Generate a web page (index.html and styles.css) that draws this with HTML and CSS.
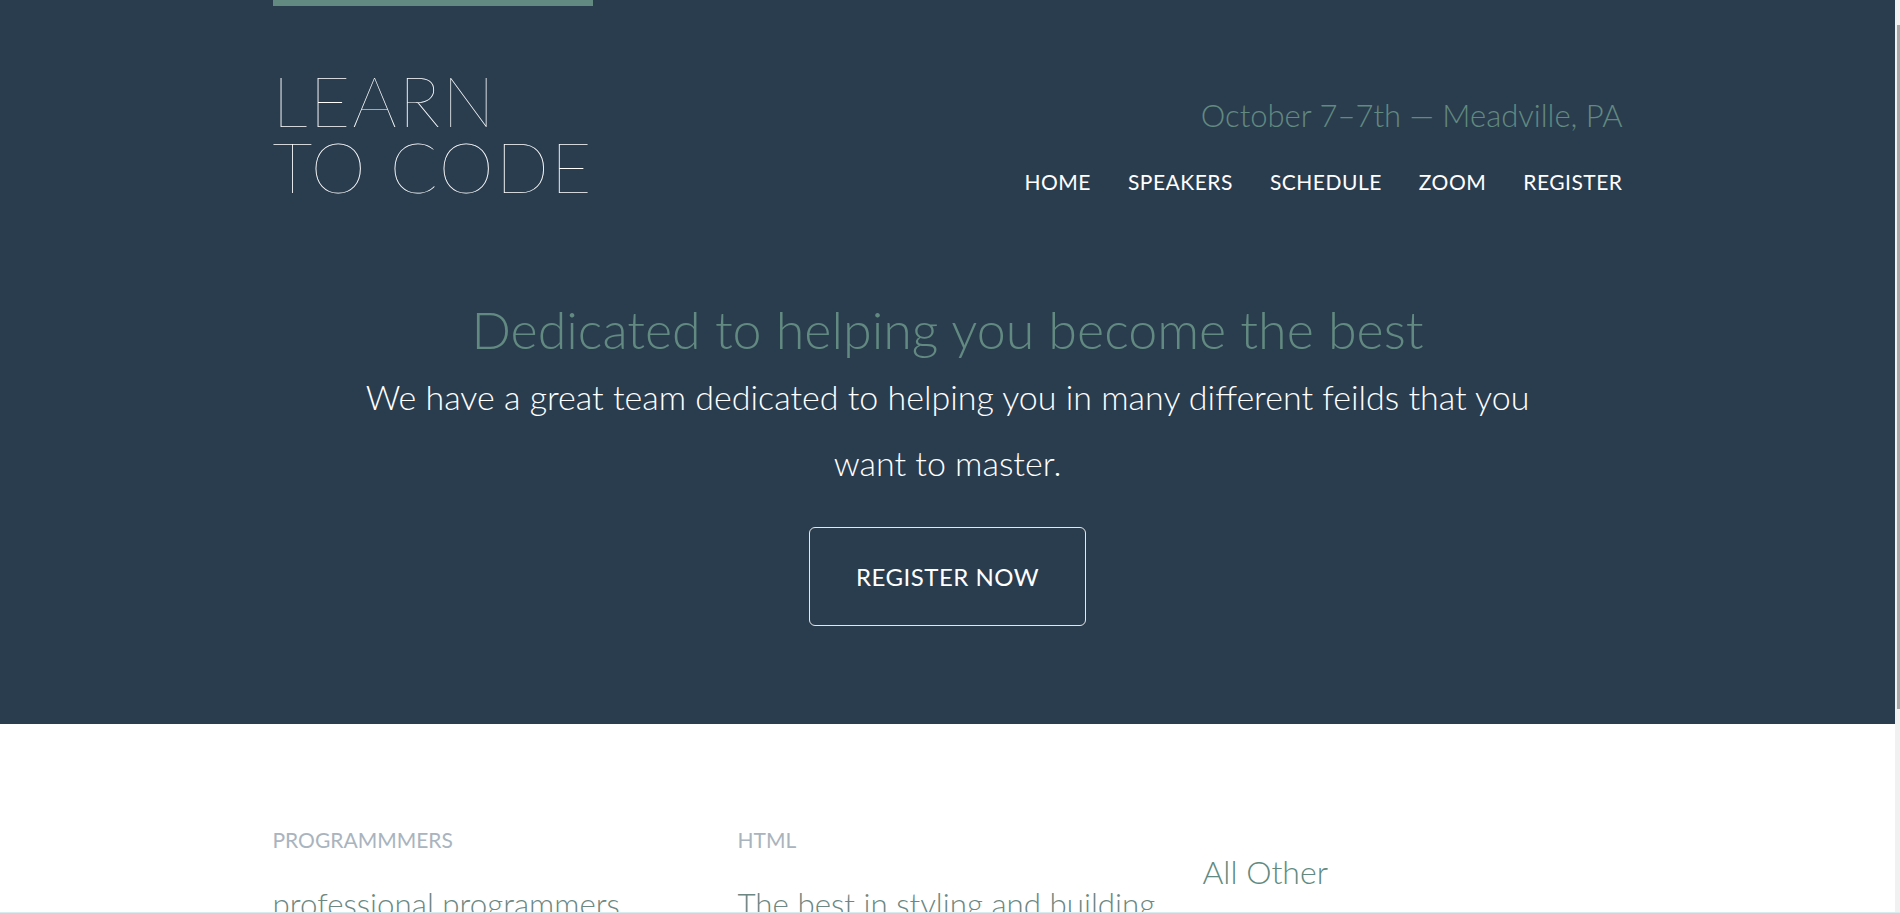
FILE: index.html
```html
<!DOCTYPE html>
<html lang="en">
<head>
<meta charset="utf-8">
<title>Learn to Code</title>
<link rel="stylesheet" href="styles.css">
</head>
<body>
<div class="page">
  <header class="hero">
    <div class="container">
      <div class="topbar"></div>
      <div class="masthead">
        <h1 class="logo">LEARN<br>TO CODE</h1>
        <div class="meta">
          <p class="date">October 7–7th — Meadville, PA</p>
          <nav class="nav">
            <a href="#">HOME</a>
            <a href="#">SPEAKERS</a>
            <a href="#">SCHEDULE</a>
            <a href="#">ZOOM</a>
            <a href="#">REGISTER</a>
          </nav>
        </div>
      </div>
      <div class="intro">
        <h2 class="intro-title">Dedicated to helping you become the best</h2>
        <p class="intro-text">We have a great team dedicated to helping you in many different feilds that you want to master.</p>
        <a class="btn" href="#">REGISTER NOW</a>
      </div>
    </div>
  </header>
  <section class="features">
    <div class="container grid">
      <div class="feature">
        <h3 class="feature-label">PROGRAMMMERS</h3>
        <p class="feature-text">professional programmers</p>
      </div>
      <div class="feature">
        <h3 class="feature-label">HTML</h3>
        <p class="feature-text">The best in styling and building</p>
      </div>
      <div class="feature">
        <h3 class="feature-title">All Other</h3>
      </div>
    </div>
  </section>
</div>
<div class="scrollbar"><div class="thumb"></div></div>
<div class="edge"></div>
</body>
</html>
```

FILE: styles.css
```css
* { box-sizing: border-box; }
html, body { margin: 0; padding: 0; }
body {
  font-family: Lato, "Open Sans", "Liberation Sans", sans-serif;
  background: #ffffff;
  overflow: hidden;
}
.page { margin-right: 5px; }
.container { width: 1350px; margin: 0 auto; }

.hero { background: #2a3d4f; padding-bottom: 98px; }
.topbar { width: 320px; height: 6px; background: #628a80; }

.masthead { display: flex; justify-content: space-between; align-items: flex-start; }
.logo {
  margin: 61px 0 0 0;
  font-weight: 100;
  font-size: 70px;
  line-height: 66px;
  color: #ffffff;
  letter-spacing: 2px;
}
.meta { margin-top: 61px; display: flex; flex-direction: column; align-items: flex-end; }
.date {
  margin: 30px 0 0 0;
  font-weight: 300;
  font-size: 31px;
  line-height: 36px;
  color: #628a80;
}
.nav { display: flex; gap: 37px; margin-top: 36px; }
.nav a {
  color: #ffffff;
  text-decoration: none;
  font-size: 21px;
  line-height: 25px;
  font-weight: 400;
  letter-spacing: 0.5px;
}

.intro { display: flex; flex-direction: column; align-items: center; text-align: center; }
.intro-title {
  margin: 100px 0 0 0;
  font-weight: 300;
  font-size: 52px;
  line-height: 60px;
  color: #628a80;
}
.intro-text {
  margin: 5px 0 0 0;
  max-width: 1200px;
  font-weight: 300;
  font-size: 34px;
  line-height: 66px;
  color: #ffffff;
}
.btn {
  margin-top: 31px;
  display: inline-block;
  padding: 35px 46px;
  border: 1px solid #e6e6e6;
  border-radius: 6px;
  color: #ffffff;
  text-decoration: none;
  font-size: 24px;
  line-height: 27px;
  font-weight: 400;
  letter-spacing: 0.5px;
}

.features { padding-top: 104px; }
.grid { display: grid; grid-template-columns: 465px 465px 1fr; }
.feature-label {
  margin: 0;
  font-size: 21px;
  line-height: 24px;
  font-weight: 400;
  color: #a9b4be;
}
.feature-text {
  margin: 33px 0 0 0;
  font-size: 31.3px;
  line-height: 38px;
  font-weight: 300;
  color: #6c8883;
  white-space: nowrap;
}
.feature-title {
  margin: 25px 0 0 0;
  font-size: 32px;
  line-height: 38px;
  font-weight: 300;
  color: #628a80;
}

.scrollbar {
  position: fixed;
  top: 0; right: 0; bottom: 0;
  width: 5px;
  background: #f1f1f1;
}
.thumb {
  position: absolute;
  top: 25px; left: 2px; right: 0;
  height: 684px;
  background: #a8a8a8;
}
.edge {
  position: fixed;
  left: 0; right: 0; bottom: 0;
  height: 1px;
  background: #d6ecee;
}
```
